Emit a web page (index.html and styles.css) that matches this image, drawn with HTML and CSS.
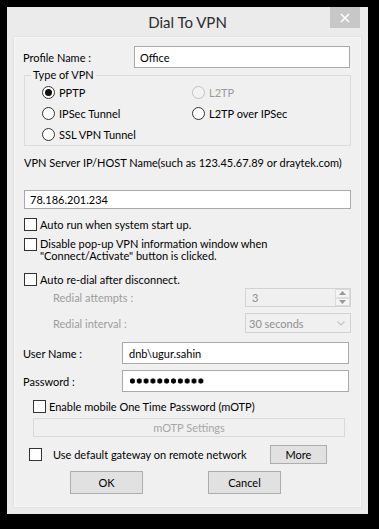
FILE: index.html
```html
<!DOCTYPE html>
<html lang="en">

<head>
    <meta charset="UTF-8">
    <title>Dial To VPN</title>
    <link rel="stylesheet" href="styles.css">
</head>

<body>
    <div class="window">
        <div class="titlebar">
            <span class="title">Dial To VPN</span>
            <button class="close">
                <svg width="10" height="10" viewBox="0 0 10 10">
                    <path d="M1 1 L9 9 M9 1 L1 9" stroke="#fff" stroke-width="1.6" fill="none" />
                </svg>
            </button>
        </div>

        <div class="client">
            <div class="row profile-row">
                <span class="row-label profile-label">Profile Name :</span>
                <input class="field profile-field" type="text" value="Office">
            </div>

            <fieldset class="vpn-type">
                <legend>Type of VPN</legend>
                <div class="radios">
                    <label class="radio-item"><span class="radio checked"></span>PPTP</label>
                    <label class="radio-item disabled"><span class="radio"></span>L2TP</label>
                    <label class="radio-item"><span class="radio"></span>IPSec Tunnel</label>
                    <label class="radio-item"><span class="radio"></span>L2TP over IPSec</label>
                    <label class="radio-item"><span class="radio"></span>SSL VPN Tunnel</label>
                </div>
            </fieldset>

            <div class="server-label">VPN Server IP/HOST Name(such as 123.45.67.89 or draytek.com)</div>
            <input class="field server-field" type="text" value="78.186.201.234">

            <label class="check check-autorun"><span class="box"></span><span>Auto run when system start up.</span></label>
            <label class="check check-popup"><span class="box"></span><span>Disable pop-up VPN information window when<br>"Connect/Activate" button is clicked.</span></label>
            <label class="check check-redial"><span class="box"></span><span>Auto re-dial after disconnect.</span></label>

            <div class="row redial-row attempts">
                <span class="dim-label">Redial attempts :</span>
                <div class="spin">
                    <span class="spin-value">3</span>
                    <div class="spin-buttons">
                        <span class="spin-btn"><svg width="7" height="4" viewBox="0 0 7 4"><path d="M0 4 L3.5 0 L7 4 Z" fill="#9a9a9a" /></svg></span>
                        <span class="spin-btn"><svg width="7" height="4" viewBox="0 0 7 4"><path d="M0 0 L3.5 4 L7 0 Z" fill="#9a9a9a" /></svg></span>
                    </div>
                </div>
            </div>

            <div class="row redial-row interval">
                <span class="dim-label">Redial interval :</span>
                <div class="select">
                    <span>30 seconds</span>
                    <svg width="8" height="5" viewBox="0 0 8 5"><path d="M0.5 0.5 L4 4 L7.5 0.5" stroke="#c4c4c4" stroke-width="1.2" fill="none" /></svg>
                </div>
            </div>

            <div class="row cred-row user-row">
                <span class="row-label cred-label">User Name :</span>
                <input class="field cred-field" type="text" value="dnb\ugur.sahin">
            </div>
            <div class="row cred-row pass-row">
                <span class="row-label cred-label">Password :</span>
                <div class="field cred-field password"><span class="dots"></span></div>
            </div>

            <label class="check check-motp"><span class="box"></span><span>Enable mobile One Time Password (mOTP)</span></label>
            <button class="btn motp-btn" disabled>mOTP Settings</button>

            <div class="row gateway-row">
                <span class="box"></span>
                <span class="gateway-text">Use default gateway on remote network</span>
                <button class="btn more-btn">More</button>
            </div>

            <div class="row action-row">
                <button class="btn action-btn">OK</button>
                <button class="btn action-btn">Cancel</button>
            </div>
        </div>
    </div>
</body>

</html>
```

FILE: styles.css
```css
body {
    margin: 0;
    background-color: #000;
    font-family: Lato, "Noto Sans", sans-serif;
    font-size: 11px;
    color: #000;
}

.window {
    margin: 7px;
    width: 361px;
    height: 507px;
    background-color: #ebebeb;
    display: flex;
    flex-direction: column;
}

.titlebar {
    height: 30px;
    display: grid;
    grid-template-columns: 1fr auto 1fr;
}

.title {
    grid-column: 2;
    font-size: 15px;
    line-height: 30px;
    color: #2b2b2b;
}

.close {
    grid-column: 3;
    justify-self: end;
    align-self: start;
    width: 30px;
    height: 21px;
    margin-right: 8px;
    padding: 0;
    border: none;
    background-color: #c7c7c7;
    display: flex;
    align-items: center;
    justify-content: center;
}

.client {
    flex: 1;
    margin: 0 7px 7px;
    padding: 0 10px;
    background-color: #f0f0f0;
    box-shadow: inset 0 0 0 1px #f7f7f7, 0 0 0 1px #e2e2e2;
    display: flex;
    flex-direction: column;
    align-items: flex-start;
    white-space: nowrap;
}

.row {
    display: flex;
    align-items: center;
}

.field {
    box-sizing: border-box;
    margin: 0;
    border: 1px solid #a9a9a9;
    background-color: #fff;
    font-family: inherit;
    font-size: 11px;
    color: #000;
    outline: none;
}

/* profile */
.profile-row {
    margin-top: 9px;
}

.profile-label {
    width: 110px;
    margin-left: -1px;
}

.profile-field {
    width: 216px;
    height: 22px;
    padding: 0 0 0 5px;
    margin-left: 1px;
}

/* type of vpn */
.vpn-type {
    box-sizing: border-box;
    width: 327px;
    margin: 0;
    padding: 0;
    border: 1px solid #dcdcdc;
}

.vpn-type legend {
    margin-left: 6px;
    padding: 0 2px;
    line-height: 14px;
}

.radios {
    display: grid;
    grid-template-columns: 150px 1fr;
    grid-auto-rows: 21px;
    padding-left: 17px;
}

.radio-item {
    display: flex;
    align-items: center;
}

.radio {
    box-sizing: border-box;
    width: 13px;
    height: 13px;
    margin-right: 4px;
    border: 1px solid #333;
    border-radius: 50%;
    background-color: #fff;
    display: flex;
    align-items: center;
    justify-content: center;
}

.radio.checked::after {
    content: "";
    width: 7px;
    height: 7px;
    border-radius: 50%;
    background-color: #111;
}

.radio-item.disabled {
    color: #9a9a9a;
}

.radio-item.disabled .radio {
    border-color: #c2c2c2;
    background-color: #f3f3f3;
}

/* server */
.server-label {
    margin-top: 9px;
    line-height: 16px;
}

.server-field {
    width: 327px;
    height: 19px;
    margin-top: 19px;
    padding: 0 0 0 5px;
}

/* checkboxes */
.check {
    display: flex;
    align-items: flex-start;
    line-height: 13px;
}

.box {
    box-sizing: border-box;
    flex: none;
    width: 13px;
    height: 13px;
    margin-right: 3px;
    border: 1px solid #333;
    background-color: #fff;
}

.check-autorun {
    margin-top: 9px;
}

.check-popup {
    margin-top: 7px;
    line-height: 12px;
}

.check-redial {
    margin-top: 11px;
}

/* redial */
.redial-row {
    width: 327px;
    justify-content: space-between;
}

.dim-label {
    margin-left: 29px;
    color: #9d9d9d;
}

.attempts {
    margin-top: 2px;
}

.interval {
    margin-top: 6px;
}

.spin {
    box-sizing: border-box;
    width: 106px;
    height: 19px;
    border: 1px solid #d3d3d3;
    display: flex;
    justify-content: space-between;
}

.spin-value {
    padding-left: 6px;
    line-height: 17px;
    color: #8f8f8f;
}

.spin-buttons {
    width: 15px;
    display: flex;
    flex-direction: column;
}

.spin-btn {
    flex: 1;
    display: flex;
    align-items: center;
    justify-content: center;
    border: 1px solid #dcdcdc;
    background-color: #f4f4f4;
}

.select {
    box-sizing: border-box;
    width: 106px;
    height: 20px;
    padding: 0 5px 0 3px;
    border: 1px solid #d3d3d3;
    color: #8f8f8f;
    display: flex;
    align-items: center;
    justify-content: space-between;
}

/* credentials */
.cred-row {
    width: 327px;
}

.user-row {
    margin-top: 9px;
}

.pass-row {
    margin-top: 6px;
}

.cred-label {
    width: 99px;
    margin-left: -1px;
}

.cred-field {
    width: 227px;
    height: 22px;
    padding: 0 0 0 6px;
}

.password {
    display: flex;
    align-items: center;
}

.dots {
    width: 75px;
    height: 6px;
    background-image: radial-gradient(circle, #000 2.3px, transparent 2.9px);
    background-size: 6.85px 6px;
    background-position: 0 0;
}

/* motp */
.check-motp {
    margin-top: 8px;
    margin-left: 9px;
}

.btn {
    box-sizing: border-box;
    margin: 0;
    padding: 0;
    font-family: inherit;
    font-size: 11px;
    color: #000;
    border: 1px solid #adadad;
    background-color: #e1e1e1;
}

.motp-btn {
    width: 312px;
    height: 19px;
    margin-top: 5px;
    margin-left: 9px;
    border-color: #dadada;
    background-color: #f0f0f0;
    color: #a6a6a6;
}

.gateway-row {
    margin-top: 8px;
    margin-left: 5px;
}

.gateway-row .box {
    margin-right: 11px;
}

.gateway-text {
    width: 217px;
}

.more-btn {
    width: 57px;
    height: 19px;
}

.action-row {
    margin-top: 7px;
    margin-left: 46px;
    gap: 65px;
}

.action-btn {
    width: 73px;
    height: 23px;
}
```
